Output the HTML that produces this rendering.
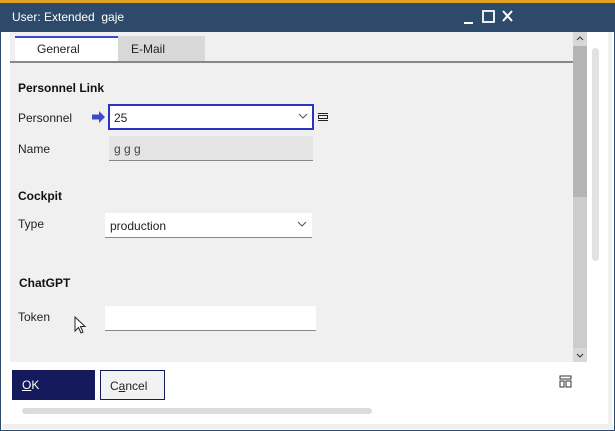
<!DOCTYPE html>
<html><head><style>
*{margin:0;padding:0;box-sizing:border-box}
body{width:615px;height:431px;position:relative;background:#fff;font-family:"Liberation Sans",Arial,sans-serif;font-size:12px;color:#222;overflow:hidden}
.a{position:absolute}
.lbl{position:absolute;font-size:12px;color:#222}
.h{position:absolute;font-size:12px;font-weight:bold;color:#111}
</style></head><body>
<div class="a" style="left:0;top:0;width:615px;height:431px;border:1px solid #2e4a6b;border-top:none"></div>
<div class="a" style="left:0;top:0;width:615px;height:3px;background:#e0a020"></div>
<div class="a" style="left:0;top:3px;width:615px;height:29px;background:#2e4a6b"></div>
<div class="a" style="left:12px;top:10px;color:#fff;font-size:12px">User: Extended&nbsp; gaje</div>
<svg class="a" style="left:460px;top:8px" width="56" height="18"><path d="M4 15H13" stroke="#fff" stroke-width="2"/><rect x="23" y="3" width="11" height="11" stroke="#fff" stroke-width="1.8" fill="none"/><path d="M43 3L52 13M52 3L43 13" stroke="#fff" stroke-width="2"/></svg>
<div class="a" style="left:2px;top:32px;width:610px;height:398px;background:#fff;border-right:4px solid #f0f0f0"></div>
<div class="a" style="left:2px;top:424px;width:611px;height:5px;background:#f0f0f0"></div>
<div class="a" style="left:10px;top:32px;width:563px;height:330px;background:#f0f0f0"></div>
<div class="a" style="left:15px;top:36px;width:103px;height:26px;background:#fff;border-top:2px solid #3a4acc"></div>
<div class="lbl" style="left:37px;top:42px">General</div>
<div class="a" style="left:118px;top:36px;width:87px;height:26px;background:#d8d8d8"></div>
<div class="lbl" style="left:131px;top:42px">E-Mail</div>
<div class="a" style="left:10px;top:61px;width:563px;height:2px;background:#888"></div>
<div class="a" style="left:573px;top:32px;width:14px;height:330px;background:#ccc"></div>
<div class="a" style="left:573px;top:32px;width:14px;height:14px;background:#d8d8d8"></div>
<svg class="a" style="left:573px;top:32px" width="14" height="14"><path d="M4 8L7 5L10 8" stroke="#333" fill="none"/></svg>
<div class="a" style="left:573px;top:46px;width:14px;height:151px;background:#b4b4b4"></div>
<div class="a" style="left:573px;top:348px;width:14px;height:14px;background:#d8d8d8"></div>
<svg class="a" style="left:573px;top:348px" width="14" height="14"><path d="M4 6L7 9L10 6" stroke="#333" fill="none"/></svg>
<div class="a" style="left:592px;top:48px;width:7px;height:213px;background:#e2e2e2;border-radius:4px"></div>
<div class="h" style="left:18px;top:81px">Personnel Link</div>
<div class="lbl" style="left:18px;top:111px">Personnel</div>
<svg class="a" style="left:92px;top:111px" width="14" height="12"><path d="M0 3.5H7V0L13 6L7 12V8.5H0Z" fill="#3a4acc"/></svg>
<div class="a" style="left:108px;top:104px;width:206px;height:26px;background:#fff;border:2px solid #2a34c0"></div>
<div class="lbl" style="left:114px;top:111px">25</div>
<svg class="a" style="left:298px;top:112px" width="10" height="8"><path d="M1 2L5 6L9 2" stroke="#555" fill="none"/></svg>
<svg class="a" style="left:317px;top:112px" width="12" height="10"><path d="M1 1.5H11M1 8.5H11" stroke="#222"/><rect x="1.5" y="3.5" width="9" height="3" stroke="#222" fill="none"/></svg>
<div class="lbl" style="left:18px;top:142px">Name</div>
<div class="a" style="left:109px;top:136px;width:204px;height:25px;background:#e4e4e4;border-bottom:1px solid #888"></div>
<div class="lbl" style="left:114px;top:142px;color:#444">g g g</div>
<div class="h" style="left:18px;top:189px">Cockpit</div>
<div class="lbl" style="left:18px;top:217px">Type</div>
<div class="a" style="left:105px;top:213px;width:207px;height:25px;background:#fff;border-bottom:1px solid #888"></div>
<div class="lbl" style="left:110px;top:219px">production</div>
<svg class="a" style="left:297px;top:220px" width="10" height="8"><path d="M1 2L5 6L9 2" stroke="#555" fill="none"/></svg>
<div class="h" style="left:19px;top:276px">ChatGPT</div>
<div class="lbl" style="left:18px;top:310px">Token</div>
<div class="a" style="left:105px;top:306px;width:211px;height:25px;background:#fff;border-bottom:1px solid #888"></div>
<svg class="a" style="left:74px;top:316px" width="14" height="20"><path d="M1 1V15L4.5 11.5L7 17L9 16L6.5 10.5H11Z" fill="#fff" stroke="#222" stroke-width="1"/></svg>
<div class="a" style="left:12px;top:370px;width:83px;height:30px;background:#141a5c;color:#fff;font-size:12px;padding:8px 0 0 10px"><u>O</u>K</div>
<div class="a" style="left:100px;top:370px;width:65px;height:30px;background:#f2f2f2;border:1px solid #141a5c;font-size:12px;padding:8px 0 0 9px">C<u>a</u>ncel</div>
<svg class="a" style="left:559px;top:375px" width="14" height="14"><rect x="1" y="1" width="11" height="3" stroke="#333" fill="none"/><rect x="1" y="6" width="4" height="6" stroke="#333" fill="none"/><rect x="7" y="6" width="5" height="6" stroke="#333" fill="none"/></svg>
<div class="a" style="left:22px;top:408px;width:350px;height:6px;background:#dcdcdc;border-radius:3px"></div>
</body></html>
